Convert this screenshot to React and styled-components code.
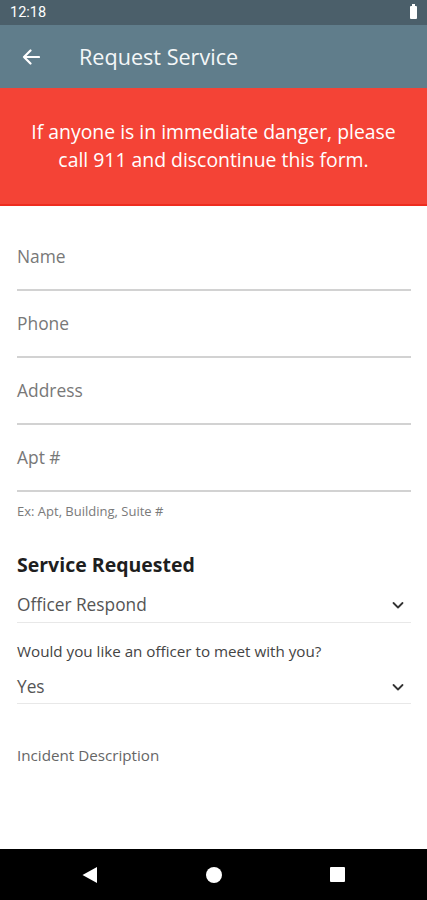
import React from 'react';
import styled, { createGlobalStyle } from 'styled-components';

const GlobalStyle = createGlobalStyle`
    html, body {
        margin: 0;
        padding: 0;
        background: #ffffff;
    }
    body {
        font-family: "Open Sans", "Noto Sans", sans-serif;
    }
`;

const Screen = styled.div`
    width: 427px;
    height: 900px;
    display: flex;
    flex-direction: column;
    overflow: hidden;
`;

const StatusBar = styled.div`
    height: 25px;
    background-color: #4b5f6a;
    display: flex;
    align-items: center;
    justify-content: space-between;
    padding: 0 10px 0 10px;
    color: #ffffff;
    font-family: Roboto, sans-serif;
    font-size: 14.5px;
`;

const Battery = styled.div`
    position: relative;
    width: 7px;
    height: 13px;
    background-color: #ffffff;
    border-radius: 1px;
    &::before {
        content: '';
        position: absolute;
        top: -2px;
        left: 2px;
        width: 3px;
        height: 2px;
        background-color: #ffffff;
    }
`;

const AppBar = styled.div`
    height: 63px;
    background-color: #607d8b;
    display: flex;
    align-items: center;
    padding-left: 22px;
    gap: 39px;
`;

const Title = styled.div`
    color: #f4f7f8;
    font-size: 21.6px;
`;

const Banner = styled.div`
    height: 118px;
    box-sizing: border-box;
    background-color: #f44336;
    border-bottom: 2px solid #ee2c1f;
    display: flex;
    align-items: center;
    justify-content: center;
    text-align: center;
    color: #ffffff;
    font-size: 19.4px;
    line-height: 28px;
    padding: 0 16px;
`;

const Form = styled.div`
    flex: 1;
    padding: 18px 16px 0 17px;
`;

const Field = styled.div`
    padding: 21px 0 22px 0;
    border-bottom: 2px solid #d2d2d2;
    color: #787878;
    font-size: 17.4px;
    line-height: 22px;
`;

const Hint = styled.div`
    margin-top: 11px;
    font-size: 13px;
    line-height: 16px;
    color: #7a7a7a;
`;

const Heading = styled.div`
    margin-top: 34px;
    font-size: 19.5px;
    font-weight: 700;
    line-height: 24px;
    color: #1e1e1e;
`;

const SelectRow = styled.div`
    margin-top: ${props => props.top}px;
    padding-bottom: ${props => props.bottom}px;
    border-bottom: 1px solid #e8e8e8;
    display: flex;
    align-items: center;
    justify-content: space-between;
    font-size: 17.3px;
    line-height: 24px;
    color: #555555;
`;

const Chevron = styled.svg`
    width: 14px;
    height: 14px;
    margin-right: 6px;
`;

const Question = styled.div`
    margin-top: 18px;
    font-size: 15.2px;
    line-height: 20px;
    color: #444444;
`;

const Description = styled.div`
    margin-top: 41px;
    font-size: 15.2px;
    line-height: 20px;
    color: #666666;
`;

const NavBar = styled.div`
    height: 51px;
    background-color: #000000;
    display: flex;
    align-items: center;
    justify-content: space-between;
    padding: 0 82px 0 81px;
`;

const NavCircle = styled.div`
    width: 16px;
    height: 16px;
    border-radius: 50%;
    background-color: #ffffff;
`;

const NavSquare = styled.div`
    width: 15px;
    height: 15px;
    border-radius: 1px;
    background-color: #ffffff;
`;

const ChevronDown = () => (
    <Chevron viewBox="0 0 14 14">
        <path d="M2.5 5 L7 9.5 L11.5 5" fill="none" stroke="#333333" strokeWidth="1.8" strokeLinecap="round" strokeLinejoin="round"/>
    </Chevron>
);

const App = () => (
    <Screen>
        <GlobalStyle/>
        <StatusBar>
            <span>12:18</span>
            <Battery/>
        </StatusBar>
        <AppBar>
            <svg width="18" height="16" viewBox="0 0 18 16">
                <path d="M17 8 H2 M8.5 1.5 L2 8 L8.5 14.5" fill="none" stroke="#ffffff" strokeWidth="2.2" strokeLinecap="round" strokeLinejoin="round"/>
            </svg>
            <Title>Request Service</Title>
        </AppBar>
        <Banner>
            If anyone is in immediate danger, please call 911 and discontinue this form.
        </Banner>
        <Form>
            <Field>Name</Field>
            <Field>Phone</Field>
            <Field>Address</Field>
            <Field>Apt #</Field>
            <Hint>Ex: Apt, Building, Suite #</Hint>
            <Heading>Service Requested</Heading>
            <SelectRow top={16} bottom={5}>
                <span>Officer Respond</span>
                <ChevronDown/>
            </SelectRow>
            <Question>Would you like an officer to meet with you?</Question>
            <SelectRow top={14} bottom={4}>
                <span>Yes</span>
                <ChevronDown/>
            </SelectRow>
            <Description>Incident Description</Description>
        </Form>
        <NavBar>
            <svg width="17" height="18" viewBox="0 0 17 18">
                <path d="M16 1 L16 17 L1.5 9 Z" fill="#ffffff"/>
            </svg>
            <NavCircle/>
            <NavSquare/>
        </NavBar>
    </Screen>
);

export default App;
